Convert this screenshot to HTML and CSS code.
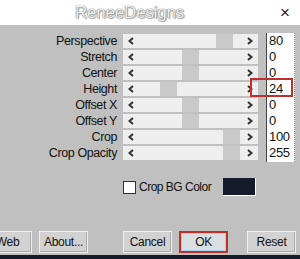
FILE: index.html
```html
<!DOCTYPE html>
<html lang="en">
<head>
  <meta charset="UTF-8">
  <title>ReneeDesigns</title>
  <link rel="stylesheet" href="styles.css">
</head>
<body>
  <div class="titlebar">
    <span class="title">ReneeDesigns</span>
    <span class="close">&times;</span>
  </div>

  <div class="params">
    <div class="sliders">
      <div class="row">
        <label>Perspective</label>
        <div class="track">
          <svg class="arrow" width="6" height="8" viewBox="0 0 6 8"><polyline points="5,1 1.5,4 5,7"/></svg>
          <span class="thumb" style="left: 93px"></span>
          <svg class="arrow right" width="6" height="8" viewBox="0 0 6 8"><polyline points="1,1 4.5,4 1,7"/></svg>
        </div>
      </div>
      <div class="row">
        <label>Stretch</label>
        <div class="track">
          <svg class="arrow" width="6" height="8" viewBox="0 0 6 8"><polyline points="5,1 1.5,4 5,7"/></svg>
          <span class="thumb" style="left: 59px"></span>
          <svg class="arrow right" width="6" height="8" viewBox="0 0 6 8"><polyline points="1,1 4.5,4 1,7"/></svg>
        </div>
      </div>
      <div class="row">
        <label>Center</label>
        <div class="track">
          <svg class="arrow" width="6" height="8" viewBox="0 0 6 8"><polyline points="5,1 1.5,4 5,7"/></svg>
          <span class="thumb" style="left: 59px"></span>
          <svg class="arrow right" width="6" height="8" viewBox="0 0 6 8"><polyline points="1,1 4.5,4 1,7"/></svg>
        </div>
      </div>
      <div class="row">
        <label>Height</label>
        <div class="track">
          <svg class="arrow" width="6" height="8" viewBox="0 0 6 8"><polyline points="5,1 1.5,4 5,7"/></svg>
          <span class="thumb" style="left: 37px"></span>
          <svg class="arrow right" width="6" height="8" viewBox="0 0 6 8"><polyline points="1,1 4.5,4 1,7"/></svg>
        </div>
      </div>
      <div class="row">
        <label>Offset X</label>
        <div class="track">
          <svg class="arrow" width="6" height="8" viewBox="0 0 6 8"><polyline points="5,1 1.5,4 5,7"/></svg>
          <span class="thumb" style="left: 59px"></span>
          <svg class="arrow right" width="6" height="8" viewBox="0 0 6 8"><polyline points="1,1 4.5,4 1,7"/></svg>
        </div>
      </div>
      <div class="row">
        <label>Offset Y</label>
        <div class="track">
          <svg class="arrow" width="6" height="8" viewBox="0 0 6 8"><polyline points="5,1 1.5,4 5,7"/></svg>
          <span class="thumb" style="left: 59px"></span>
          <svg class="arrow right" width="6" height="8" viewBox="0 0 6 8"><polyline points="1,1 4.5,4 1,7"/></svg>
        </div>
      </div>
      <div class="row">
        <label>Crop</label>
        <div class="track">
          <svg class="arrow" width="6" height="8" viewBox="0 0 6 8"><polyline points="5,1 1.5,4 5,7"/></svg>
          <span class="thumb" style="left: 100px"></span>
          <svg class="arrow right" width="6" height="8" viewBox="0 0 6 8"><polyline points="1,1 4.5,4 1,7"/></svg>
        </div>
      </div>
      <div class="row">
        <label>Crop Opacity</label>
        <div class="track">
          <svg class="arrow" width="6" height="8" viewBox="0 0 6 8"><polyline points="5,1 1.5,4 5,7"/></svg>
          <span class="thumb" style="left: 100px"></span>
          <svg class="arrow right" width="6" height="8" viewBox="0 0 6 8"><polyline points="1,1 4.5,4 1,7"/></svg>
        </div>
      </div>
    </div>
    <div class="values">
      <div>80</div>
      <div>0</div>
      <div>0</div>
      <div>24</div>
      <div>0</div>
      <div>0</div>
      <div>100</div>
      <div>255</div>
    </div>
  </div>

  <div class="bg-row">
    <span class="checkbox"></span>
    <span class="check-label">Crop BG Color</span>
    <span class="swatch"></span>
  </div>

  <div class="buttons">
    <button class="btn web">Web</button>
    <button class="btn about">About...</button>
    <button class="btn cancel">Cancel</button>
    <span class="ok-frame"><button class="btn ok">OK</button></span>
    <button class="btn reset">Reset</button>
  </div>

  <div class="bottom-strip"></div>

  <!-- red marker around the Height value -->
  <div class="marker"></div>
</body>
</html>
```

FILE: styles.css
```css
body {
  margin: 0;
  width: 300px;
  height: 259px;
  overflow: hidden;
  position: relative;
  display: flex;
  flex-direction: column;
  background: #c0c0c0;
  font-family: 'Liberation Sans', Arial, sans-serif;
  font-size: 12px;
  color: #111;
}

.titlebar {
  flex: none;
  height: 25px;
  background: #fff;
  display: flex;
  align-items: center;
}

.title {
  margin-left: 75px;
  font-size: 17px;
  color: #f2f2f2;
  text-shadow: 0 0 1px #666, 0 0 1px #666, 1px 1px 1px #b0b0b0;
  letter-spacing: -0.2px;
}

.close {
  margin-left: auto;
  margin-right: 10px;
  font-size: 17px;
  color: #222;
}

.params {
  flex: none;
  display: flex;
  margin-top: 8px;
}

.sliders {
  width: 258px;
}

.row {
  display: flex;
  align-items: center;
  height: 16px;
}

.row label {
  width: 117px;
  text-align: right;
  margin-right: 6px;
  letter-spacing: -0.4px;
  line-height: 14px;
  font-size: 12.5px;
}

.track {
  position: relative;
  width: 135px;
  height: 14px;
  background: #eeeeee;
}

.arrow {
  position: absolute;
  left: 5px;
  top: 3px;
  fill: none;
  stroke: #333;
  stroke-width: 2;
}

.arrow.right {
  left: auto;
  right: 5px;
}

.thumb {
  position: absolute;
  top: 0;
  width: 17px;
  height: 14px;
  background: #c9c9c9;
}

.values {
  margin-left: 8px;
  width: 29px;
  height: 129px;
  background: #fff;
  border-left: 1px solid #444;
  border-right: 1px dotted #888;
  padding-left: 2px;
  box-sizing: border-box;
  font-size: 13px;
  letter-spacing: -0.3px;
}

.values div {
  height: 16px;
  line-height: 16px;
}

.bg-row {
  flex: none;
  display: flex;
  align-items: center;
  width: 133px;
  margin-top: 16px;
  margin-left: 123px;
  height: 18px;
}

.checkbox {
  width: 11px;
  height: 11px;
  background: #fff;
  border: 1px solid #333;
}

.check-label {
  margin-left: 3px;
  letter-spacing: -0.5px;
}

.swatch {
  margin-left: auto;
  width: 32px;
  height: 17px;
  background: #131a2a;
  border-right: 1px solid #fff;
  border-bottom: 1px solid #fff;
}

.buttons {
  flex: none;
  display: flex;
  align-items: center;
  margin-top: 35px;
  margin-left: -17px;
}

.btn {
  width: 49px;
  height: 22px;
  padding: 0;
  font-family: inherit;
  font-size: 12px;
  color: #111;
  background: #d2d2d2;
  border: 1px solid #f2f2f2;
  box-shadow: inset -1px -1px 0 #a8a8a8;
  letter-spacing: -0.3px;
}

.about {
  margin-left: 7px;
}

.cancel {
  margin-left: 35px;
}

.ok-frame {
  margin-left: 7px;
  border: 2px solid #c0302a;
  display: flex;
}

.btn.ok {
  width: 45px;
  height: 18px;
  background: #dadfe3;
  border: 1px solid #9fd3ef;
  box-shadow: none;
}

.reset {
  margin-left: 19px;
}

.bottom-strip {
  flex: none;
  margin-top: auto;
  height: 4px;
  background: #151a28;
}

.marker {
  position: absolute;
  left: 250px;
  top: 78px;
  width: 39px;
  height: 15px;
  border: 2px solid #c0302a;
}
```
